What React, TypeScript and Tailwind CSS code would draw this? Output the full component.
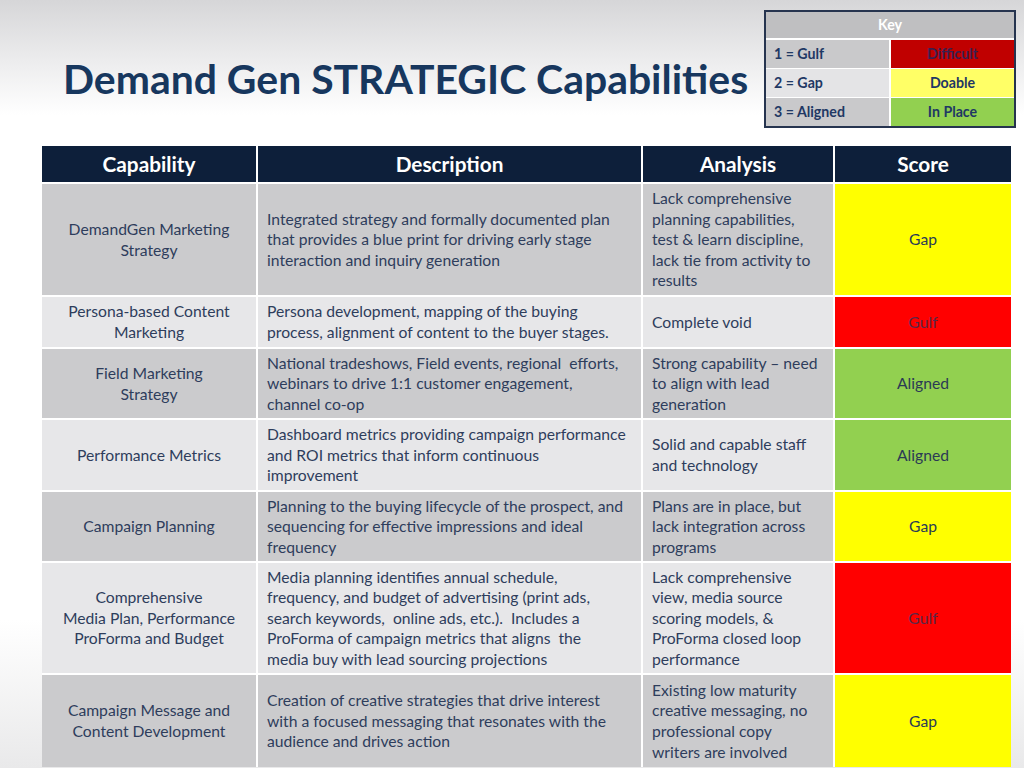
import React from 'react'

type Score = 'Gap' | 'Gulf' | 'Aligned'

const ROWS: { cap: string[]; desc: string[]; analysis: string[]; score: Score; h: string }[] = [
  {
    cap: ['DemandGen Marketing', 'Strategy'],
    desc: ['Integrated strategy and formally documented plan', 'that provides a blue print for driving early stage', 'interaction and inquiry generation'],
    analysis: ['Lack comprehensive', 'planning capabilities,', 'test & learn discipline,', 'lack tie from activity to', 'results'],
    score: 'Gap',
    h: 'h-[111px]',
  },
  {
    cap: ['Persona-based Content', 'Marketing'],
    desc: ['Persona development, mapping of the buying', 'process, alignment of content to the buyer stages.'],
    analysis: ['Complete void'],
    score: 'Gulf',
    h: 'h-[50px]',
  },
  {
    cap: ['Field Marketing', 'Strategy'],
    desc: ['National tradeshows, Field events, regional  efforts,', 'webinars to drive 1:1 customer engagement,', 'channel co-op'],
    analysis: ['Strong capability – need', 'to align with lead', 'generation'],
    score: 'Aligned',
    h: 'h-[69px]',
  },
  {
    cap: ['Performance Metrics'],
    desc: ['Dashboard metrics providing campaign performance', 'and ROI metrics that inform continuous', 'improvement'],
    analysis: ['Solid and capable staff', 'and technology'],
    score: 'Aligned',
    h: 'h-[70px]',
  },
  {
    cap: ['Campaign Planning'],
    desc: ['Planning to the buying lifecycle of the prospect, and', 'sequencing for effective impressions and ideal', 'frequency'],
    analysis: ['Plans are in place, but', 'lack integration across', 'programs'],
    score: 'Gap',
    h: 'h-[69px]',
  },
  {
    cap: ['Comprehensive', 'Media Plan, Performance', 'ProForma and Budget'],
    desc: ['Media planning identifies annual schedule,', 'frequency, and budget of advertising (print ads,', 'search keywords,  online ads, etc.).  Includes a', 'ProForma of campaign metrics that aligns  the', 'media buy with lead sourcing projections'],
    analysis: ['Lack comprehensive', 'view, media source', 'scoring models, &', 'ProForma closed loop', 'performance'],
    score: 'Gulf',
    h: 'h-[110px]',
  },
  {
    cap: ['Campaign Message and', 'Content Development'],
    desc: ['Creation of creative strategies that drive interest', 'with a focused messaging that resonates with the', 'audience and drives action'],
    analysis: ['Existing low maturity', 'creative messaging, no', 'professional copy', 'writers are involved'],
    score: 'Gap',
    h: 'h-[92px]',
  },
]

const SCORE_STYLE: Record<Score, string> = {
  Gap: 'bg-[#ffff00] text-[#2b3a55]',
  Gulf: 'bg-[#ff0000] text-[#5a2848]',
  Aligned: 'bg-[#92d050] text-[#2b3a55]',
}

function Lines({ lines }: { lines: string[] }) {
  return (
    <>
      {lines.map((l, i) => (
        <div key={i} className="whitespace-pre">{l}</div>
      ))}
    </>
  )
}

function KeyTable() {
  return (
    <div className="w-[252px] border-2 border-[#26344f] bg-white text-[14.2px] font-bold">
      <div className="h-[28px] flex items-center justify-center bg-[#bfbfc1] text-white border-b-2 border-white">Key</div>
      <div className="grid grid-cols-[123px_1fr] gap-x-[2px] gap-y-[1px] bg-white">
        <div className="h-[28px] flex items-center pl-[8px] bg-[#c9c9cb] text-[#1f3864]">1 = Gulf</div>
        <div className="h-[28px] flex items-center justify-center bg-[#c00000] text-[#3a2050]">Difficult</div>
        <div className="h-[28px] flex items-center pl-[8px] bg-[#e4e4e6] text-[#1f3864]">2 = Gap</div>
        <div className="h-[28px] flex items-center justify-center bg-[#ffff66] text-[#1f3864]">Doable</div>
        <div className="h-[28px] flex items-center pl-[8px] bg-[#c9c9cb] text-[#1f3864]">3 = Aligned</div>
        <div className="h-[28px] flex items-center justify-center bg-[#92d050] text-[#1f3864]">In Place</div>
      </div>
    </div>
  )
}

export default function App() {
  return (
    <div
      className="w-[1024px] h-[768px] overflow-hidden relative bg-[linear-gradient(180deg,#d6d6d8_0px,#ececed_60px,#ffffff_115px,#ffffff_620px,#e9e9ea_768px)]"
      style={{ fontFamily: 'Lato, "Open Sans", sans-serif' }}
    >
      <div className="flex items-start pl-[63px] pr-[8px] pt-[10px]">
        <h1 className="mt-[44px] text-[40.9px] leading-[50px] font-bold text-[#17375e] flex-1 whitespace-nowrap">
          Demand Gen STRATEGIC Capabilities
        </h1>
        <KeyTable />
      </div>

      <div className="mt-[18px] ml-[42px] w-[969px] grid grid-cols-[214px_383px_190px_176px] gap-[2px] bg-white text-[15.7px] leading-[20.6px] text-[#2e3d5c]">
        {['Capability', 'Description', 'Analysis', 'Score'].map(h => (
          <div key={h} className="h-[36px] flex items-center justify-center bg-[#0d1f3a] text-white text-[20.8px] font-bold">
            {h}
          </div>
        ))}
        {ROWS.map((r, i) => {
          const bg = i % 2 === 0 ? 'bg-[#cbcbcd]' : 'bg-[#e7e7e9]'
          return (
            <React.Fragment key={i}>
              <div className={`${r.h} ${bg} flex flex-col justify-center items-center text-center`}>
                <Lines lines={r.cap} />
              </div>
              <div className={`${r.h} ${bg} flex flex-col justify-center pl-[9px]`}>
                <Lines lines={r.desc} />
              </div>
              <div className={`${r.h} ${bg} flex flex-col justify-center pl-[9px]`}>
                <Lines lines={r.analysis} />
              </div>
              <div className={`${r.h} ${SCORE_STYLE[r.score]} flex items-center justify-center`}>
                {r.score}
              </div>
            </React.Fragment>
          )
        })}
      </div>
    </div>
  )
}
